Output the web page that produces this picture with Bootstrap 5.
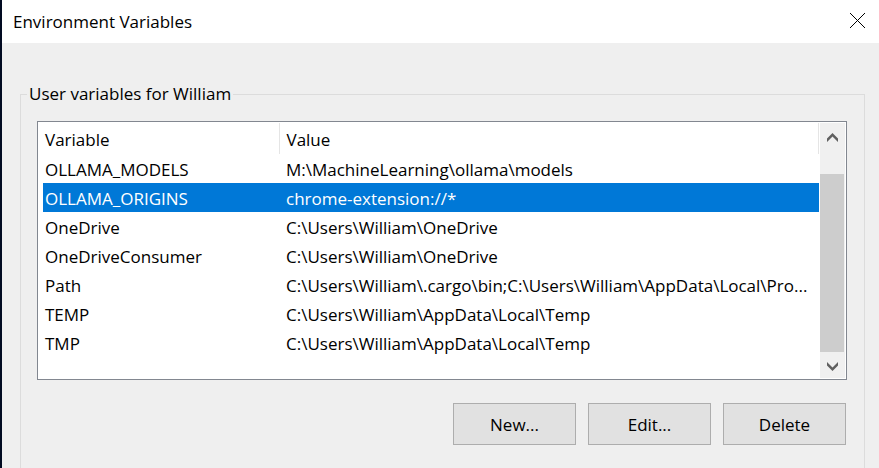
<!DOCTYPE html>
<html lang="en">
<head>
<meta charset="utf-8">
<meta name="viewport" content="width=device-width, initial-scale=1">
<title>Environment Variables</title>
<link rel="stylesheet" href="https://cdn.jsdelivr.net/npm/bootstrap@5.3.0/dist/css/bootstrap.min.css">
<style>
  body { font-family: "Segoe UI", "Open Sans", "Noto Sans", sans-serif; font-size: 17px; line-height: 27px; color: #000; background: #efefef; }
  .dialog-window { border-left: 2px solid #020b22; }
  .title-bar { background: #fff; height: 43px; padding-left: 11px; }
  .title-bar h1 { font-size: 17px; line-height: 27px; }
  .close-button { width: 43px; height: 40px; }
  .dialog-body { padding: 37px 14px 0 18px; }
  .variable-group { border: 1px solid #dcdcdc; border-bottom: 0; padding: 0 17px 0 16px; }
  .variable-group legend { font-size: 17px; line-height: 28px; padding: 0 2px; margin: 0 0 13px -10px; }
  .variable-list { background: #fff; border: 1px solid #828790; padding: 1px 1px 1px 5px; }
  .table-area { padding-bottom: 21px; }
  .variable-table { table-layout: fixed; }
  .variable-table th, .variable-table td { height: 29px; padding: 2px 0 0 7px; white-space: nowrap; overflow: hidden; text-overflow: ellipsis; }
  .variable-table th { height: 31px; border-right: 1px solid #e5e5e5; }
  .variable-table th:first-child { width: 236px; }
  .variable-table th:first-child, .variable-table td:first-child { padding-left: 2px; }
  .variable-table .selected-row { background: #0078d7; color: #fff; }
  .scroll-track { background: #f0f0f0; width: 25px; margin-left: 1px; }
  .scroll-arrow { height: 26px; padding: 2px 0 0; }
  .scroll-thumb { background: #cdcdcd; margin: 25px 1px 0 0; }
  .command-row { gap: 12px; padding: 23px 1px 23px 0; }
  .command-button { width: 123px; height: 42px; background: #e1e1e1; border: 1px solid #adadad; }
</style>
<script src="https://cdn.jsdelivr.net/npm/bootstrap@5.3.0/dist/js/bootstrap.bundle.min.js"></script>
</head>
<body>
<div class="dialog-window d-flex flex-column min-vh-100">
  <header class="title-bar d-flex align-items-center justify-content-between">
    <h1 class="fw-normal m-0">Environment Variables</h1>
    <button type="button" class="close-button btn p-0 border-0 rounded-0 align-self-start d-flex align-items-center justify-content-center" aria-label="Close">
      <svg width="15" height="15" viewBox="0 0 15 15" aria-hidden="true"><path d="M0 0l15 15M15 0L0 15" fill="none" stroke="#000" stroke-width="1"/></svg>
    </button>
  </header>
  <main class="dialog-body d-flex flex-column flex-fill">
    <fieldset class="variable-group flex-fill">
      <legend class="float-none w-auto">User variables for William</legend>
      <div class="variable-list d-flex">
        <div class="table-area flex-fill">
          <table class="variable-table w-100">
            <thead>
              <tr><th scope="col" class="fw-normal">Variable</th><th scope="col" class="fw-normal">Value</th></tr>
            </thead>
            <tbody>
              <tr><td>OLLAMA_MODELS</td><td>M:\MachineLearning\ollama\models</td></tr>
              <tr class="selected-row" aria-selected="true"><td>OLLAMA_ORIGINS</td><td>chrome-extension://*</td></tr>
              <tr><td>OneDrive</td><td>C:\Users\William\OneDrive</td></tr>
              <tr><td>OneDriveConsumer</td><td>C:\Users\William\OneDrive</td></tr>
              <tr><td>Path</td><td>C:\Users\William\.cargo\bin;C:\Users\William\AppData\Local\Pro...</td></tr>
              <tr><td>TEMP</td><td>C:\Users\William\AppData\Local\Temp</td></tr>
              <tr><td>TMP</td><td>C:\Users\William\AppData\Local\Temp</td></tr>
            </tbody>
          </table>
        </div>
        <div class="scroll-track d-flex flex-column flex-shrink-0">
          <button type="button" class="scroll-arrow btn border-0 rounded-0 d-flex align-items-center justify-content-center" aria-label="Scroll up">
            <svg width="11" height="9" viewBox="0 0 11 9" aria-hidden="true"><path d="M0 5.5L5.5 0 11 5.5V9L5.5 3.6 0 9z" fill="#606060"/></svg>
          </button>
          <div class="scroll-thumb flex-fill"></div>
          <button type="button" class="scroll-arrow btn border-0 rounded-0 d-flex align-items-center justify-content-center" aria-label="Scroll down">
            <svg width="11" height="9" viewBox="0 0 11 9" aria-hidden="true"><path d="M0 3.5L5.5 9 11 3.5V0L5.5 5.4 0 0z" fill="#606060"/></svg>
          </button>
        </div>
      </div>
      <div class="command-row d-flex justify-content-end">
        <button type="button" class="command-button p-0">New...</button>
        <button type="button" class="command-button p-0">Edit...</button>
        <button type="button" class="command-button p-0">Delete</button>
      </div>
    </fieldset>
  </main>
</div>
</body>
</html>
